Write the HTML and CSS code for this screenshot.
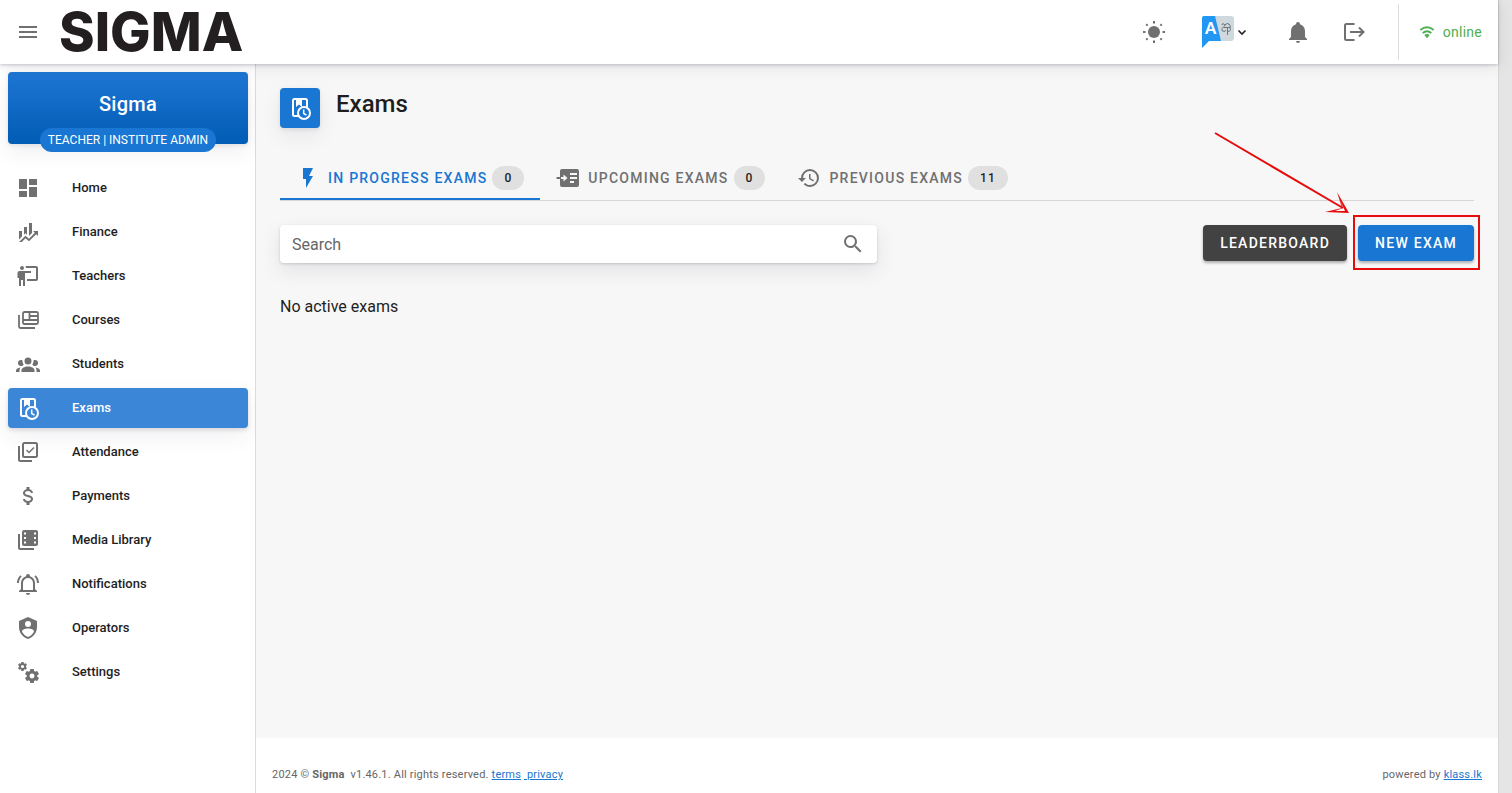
FILE: index.html
```html
<!DOCTYPE html>
<html lang="en">
<head>
<meta charset="utf-8">
<title>Exams - Sigma</title>
<link rel="stylesheet" href="styles.css">
</head>
<body>
<svg class="defs" aria-hidden="true">
  <symbol id="exam" viewBox="0 0 24 24">
    <path d="M10 20H6.500Q5 20 5 18.500V4.500Q5 3 6.500 3H17.500Q19 3 19 4.500V11" fill="none" stroke="currentColor" stroke-width="2"/>
    <path d="M8 3H14V11L11 8.500L8 11Z" fill="currentColor"/>
    <circle cx="16" cy="17" r="6" fill="none" stroke="currentColor" stroke-width="2"/>
    <path d="M15.700 13.500V17.500L18.500 19.200" fill="none" stroke="currentColor" stroke-width="1.500"/>
  </symbol>
  <symbol id="gear" viewBox="0 0 24 24">
    <path d="M12,15.500A3.500,3.500 0 0,1 8.500,12A3.500,3.500 0 0,1 12,8.500A3.500,3.500 0 0,1 15.500,12A3.500,3.500 0 0,1 12,15.500M19.430,12.970C19.470,12.650 19.500,12.330 19.500,12C19.500,11.670 19.470,11.340 19.430,11L21.540,9.370C21.730,9.220 21.780,8.950 21.660,8.730L19.660,5.270C19.540,5.050 19.270,4.960 19.050,5.050L16.560,6.050C16.040,5.660 15.500,5.320 14.870,5.070L14.500,2.420C14.460,2.180 14.250,2 14,2H10C9.750,2 9.540,2.180 9.500,2.420L9.130,5.070C8.500,5.320 7.960,5.660 7.440,6.050L4.950,5.050C4.730,4.960 4.460,5.050 4.340,5.270L2.340,8.730C2.210,8.950 2.270,9.220 2.460,9.370L4.570,11C4.530,11.340 4.500,11.670 4.500,12C4.500,12.330 4.530,12.650 4.570,12.970L2.460,14.630C2.270,14.780 2.210,15.050 2.340,15.270L4.340,18.730C4.460,18.950 4.730,19.030 4.950,18.950L7.440,17.940C7.960,18.340 8.500,18.680 9.130,18.930L9.500,21.580C9.540,21.820 9.750,22 10,22H14C14.250,22 14.460,21.820 14.500,21.580L14.870,18.930C15.500,18.670 16.040,18.340 16.560,17.940L19.050,18.950C19.270,19.030 19.540,18.950 19.660,18.730L21.660,15.270C21.780,15.050 21.730,14.780 21.540,14.630L19.430,12.970Z"/>
  </symbol>
</svg>
<div class="app">
  <header class="topbar">
    <button class="icon-btn" aria-label="Menu"><svg class="icon" viewBox="0 0 24 24"><path d="M3,6H21V8H3V6M3,11H21V13H3V11M3,16H21V18H3V16Z"/></svg></button>
    <a class="logo" href="#">SIGMA</a>
    <div class="tools">
      <button class="icon-btn" aria-label="Theme"><svg class="icon" viewBox="0 0 24 24"><circle cx="12" cy="12" r="6"/><path d="M12 1V3.500M12 20.500V23M1 12H3.500M20.500 12H23M4.200 4.200L5.600 5.600M18.400 18.400L19.800 19.800M4.200 19.800L5.600 18.400M18.400 5.600L19.800 4.200" stroke="currentColor" stroke-width="2"/></svg></button>
      <button class="lang" aria-label="Language">
        <svg class="lang-icon" viewBox="0 0 32 32">
          <path d="M12 0H29Q32 0 32 3V22Q32 25 29 25H18Z" fill="#cfd8dc"/>
          <path d="M2 0H13L19 25H7L0 32V2Q0 0 2 0Z" fill="#2196f3"/>
          <text x="3" y="18" class="lang-letter">A</text>
          <path d="M20 9Q20 7 22 8Q24 9 22 10.500Q19 12.500 20 14.500Q22 16.500 24 14.500M21.500 11.500H28M23 9Q25 6.500 27 8Q29 10 28 12Q29.500 15 26 15.500M25.500 11.500V19" fill="none" stroke="#6b777d" stroke-width="1"/>
        </svg>
        <svg class="chevron" viewBox="0 0 12 12"><path d="M2.500 4.500L6 8L9.500 4.500" fill="none" stroke="#222" stroke-width="1.600"/></svg>
      </button>
      <button class="icon-btn" aria-label="Alerts"><svg class="icon" viewBox="0 0 24 24"><path d="M21,19V20H3V19L5,17V11C5,7.900 7.030,5.170 10,4.290C10,4.190 10,4.100 10,4A2,2 0 0,1 12,2A2,2 0 0,1 14,4C14,4.100 14,4.190 14,4.290C16.970,5.170 19,7.900 19,11V17L21,19M14,21A2,2 0 0,1 12,23A2,2 0 0,1 10,21"/></svg></button>
      <button class="icon-btn" aria-label="Log out"><svg class="icon" viewBox="0 0 24 24"><path d="M12.500 4H4.500Q3 4 3 5.500V18.500Q3 20 4.500 20H12.500M8 12H21M17 7.500L21.500 12L17 16.500" fill="none" stroke="currentColor" stroke-width="2"/></svg></button>
      <div class="status"><svg class="wifi" viewBox="0 0 24 24"><path d="M2 9Q12 1 22 9M5.500 13.500Q12 8 18.500 13.500" fill="none" stroke="currentColor" stroke-width="2.800"/><path d="M8 16.500Q12 13.500 16 16.500L12 21.500Z" fill="currentColor"/></svg>online</div>
    </div>
  </header>
  <div class="body">
    <aside class="sidebar">
      <div class="profile"><span class="profile-name">Sigma</span><span class="role">TEACHER | INSTITUTE ADMIN</span></div>
      <nav class="nav">
        <a href="#"><svg class="icon" viewBox="0 0 24 24"><path d="M13,3V9H21V3M13,21H21V11H13M3,21H11V15H3M3,13H11V3H3V13Z"/></svg>Home</a>
        <a href="#"><svg class="icon" viewBox="0 0 24 24"><path d="M6,16.500L3,19.440V11H6M11,14.660L9.430,13.320L8,14.640V7H11M16,13L13,16V3H16M18.810,12.810L17,11H22V16L20.210,14.210L13,21.360L9.530,18.340L5.750,22H3L9.470,15.660L13,18.640"/></svg>Finance</a>
        <a href="#"><svg class="icon" viewBox="0 0 24 24"><path d="M20,17A2,2 0 0,0 22,15V4A2,2 0 0,0 20,2H9.460C9.810,2.610 10,3.300 10,4H20V15H11V17M15,7V9H9V22H7V16H5V22H3V14H1.500V9A2,2 0 0,1 3.500,7H15M8,4A2,2 0 0,1 6,6A2,2 0 0,1 4,4A2,2 0 0,1 6,2A2,2 0 0,1 8,4Z"/></svg>Teachers</a>
        <a href="#"><svg class="icon" viewBox="0 0 24 24"><path d="M3 7V18.500Q3 20 4.500 20H19M7 5.500Q7 4 8.500 4H20.500Q22 4 22 5.500V14.500Q22 16 20.500 16H8.500Q7 16 7 14.500ZM13.500 4V12M14 8H22M7 12H22" fill="none" stroke="currentColor" stroke-width="1.800"/></svg>Courses</a>
        <a href="#"><svg class="icon" viewBox="0 0 24 24"><path d="M12,5.500A3.500,3.500 0 0,1 15.500,9A3.500,3.500 0 0,1 12,12.500A3.500,3.500 0 0,1 8.500,9A3.500,3.500 0 0,1 12,5.500M5,8C5.560,8 6.080,8.150 6.530,8.420C6.380,9.850 6.800,11.270 7.660,12.380C7.160,13.340 6.160,14 5,14A3,3 0 0,1 2,11A3,3 0 0,1 5,8M19,8A3,3 0 0,1 22,11A3,3 0 0,1 19,14C17.840,14 16.840,13.340 16.340,12.380C17.200,11.270 17.620,9.850 17.470,8.420C17.920,8.150 18.440,8 19,8M5.500,18.250C5.500,16.180 8.410,14.500 12,14.500C15.590,14.500 18.500,16.180 18.500,18.250V20H5.500V18.250M0,20V18.500C0,17.110 1.890,15.940 4.450,15.600C3.860,16.280 3.500,17.220 3.500,18.250V20H0M24,20H20.500V18.250C20.500,17.220 20.140,16.280 19.550,15.600C22.110,15.940 24,17.110 24,18.500V20Z"/></svg>Students</a>
        <a href="#" class="active" aria-current="page"><svg class="icon"><use href="#exam"/></svg>Exams</a>
        <a href="#"><svg class="icon" viewBox="0 0 24 24"><path d="M3 6V19.500Q3 21 4.500 21H16M7 4.500Q7 3 8.500 3H19.500Q21 3 21 4.500V15.500Q21 17 19.500 17H8.500Q7 17 7 15.500Z" fill="none" stroke="currentColor" stroke-width="2"/><path d="M10.500 10L13 12.500L18 7.500" fill="none" stroke="currentColor" stroke-width="1.500"/></svg>Attendance</a>
        <a href="#"><svg class="icon" viewBox="0 0 24 24"><path d="M7,15H9C9,16.080 10.370,17 12,17C13.630,17 15,16.080 15,15C15,13.900 13.960,13.500 11.760,12.970C9.640,12.440 7,11.780 7,9C7,7.210 8.470,5.690 10.500,5.180V3H13.500V5.180C15.530,5.690 17,7.210 17,9H15C15,7.920 13.630,7 12,7C10.370,7 9,7.920 9,9C9,10.100 10.040,10.500 12.240,11.030C14.360,11.560 17,12.220 17,15C17,16.790 15.530,18.310 13.500,18.820V21H10.500V18.820C8.470,18.310 7,16.790 7,15Z"/></svg>Payments</a>
        <a href="#"><svg class="icon" viewBox="0 0 24 24"><path fill-rule="evenodd" d="M4,6H2V20A2,2 0 0,0 4,22H18V20H4V6M20,2H8A2,2 0 0,0 6,4V16A2,2 0 0,0 8,18H20A2,2 0 0,0 22,16V4A2,2 0 0,0 20,2M8 4.500H10V6.500H8ZM8 9H10V11H8ZM8 13.500H10V15.500H8ZM18 4.500H20V6.500H18ZM18 9H20V11H18ZM18 13.500H20V15.500H18Z"/></svg>Media Library</a>
        <a href="#"><svg class="icon" viewBox="0 0 24 24"><path d="M10,21H14A2,2 0 0,1 12,23A2,2 0 0,1 10,21M21,19V20H3V19L5,17V11C5,7.900 7.030,5.170 10,4.290C10,4.190 10,4.100 10,4A2,2 0 0,1 12,2A2,2 0 0,1 14,4C14,4.100 14,4.190 14,4.290C16.970,5.170 19,7.900 19,11V17L21,19M17,11A5,5 0 0,0 12,6A5,5 0 0,0 7,11V18H17V11M19.750,3.190L18.330,4.610C20.040,6.300 21,8.600 21,11H23C23,8.070 21.840,5.250 19.750,3.190M1,11H3C3,8.600 3.960,6.300 5.670,4.610L4.250,3.190C2.160,5.250 1,8.070 1,11Z"/></svg>Notifications</a>
        <a href="#"><svg class="icon" viewBox="0 0 24 24"><path fill-rule="evenodd" d="M12,1L3,5V11C3,16.550 6.840,21.740 12,23C17.160,21.740 21,16.550 21,11V5L12,1M12,5A3,3 0 0,1 15,8A3,3 0 0,1 12,11A3,3 0 0,1 9,8A3,3 0 0,1 12,5M17.130,17C15.920,18.850 14.110,20.240 12,20.920C9.890,20.240 8.080,18.850 6.870,17C6.530,16.500 6.240,16 6,15.470C6,13.820 8.710,12.470 12,12.470C15.290,12.470 18,13.790 18,15.470C17.760,16 17.470,16.500 17.130,17Z"/></svg>Operators</a>
        <a href="#"><svg class="icon" viewBox="0 0 24 24"><use href="#gear" x="1" y="1" width="11" height="11"/><use href="#gear" x="7.500" y="7.500" width="17" height="17"/></svg>Settings</a>
      </nav>
    </aside>
    <div class="content">
      <main class="main">
        <div class="heading"><span class="heading-icon"><svg class="icon"><use href="#exam"/></svg></span><h1>Exams</h1></div>
        <div class="tabs" role="tablist">
          <button class="tab selected" role="tab" aria-selected="true"><svg class="icon" viewBox="0 0 24 24"><path d="M7,2V13H10V22L17,10H13L17,2H7Z"/></svg>IN PROGRESS EXAMS<span class="count">0</span></button>
          <button class="tab" role="tab"><svg class="icon" viewBox="0 0 24 24"><path fill-rule="evenodd" d="M5 3H21Q23 3 23 5V19Q23 21 21 21H6Q4 21 4 19V13H7.500V15.500L11.500 12L7.500 8.500V11H4V5Q4 3 6 3ZM14 7V9H21V7ZM14 11V13H21V11ZM14 15V17H18V15Z"/><path d="M0.500 11H5V13H0.500Z"/></svg>UPCOMING EXAMS<span class="count">0</span></button>
          <button class="tab" role="tab"><svg class="icon" viewBox="0 0 24 24"><path d="M13.500,8H12V13L16.280,15.540L17,14.330L13.500,12.250V8M13,3A9,9 0 0,0 4,12H1L4.960,16.030L9,12H6A7,7 0 0,1 13,5A7,7 0 0,1 20,12A7,7 0 0,1 13,19C11.070,19 9.320,18.210 8.060,16.940L6.640,18.360C8.270,20 10.500,21 13,21A9,9 0 0,0 22,12A9,9 0 0,0 13,3"/></svg>PREVIOUS EXAMS<span class="count">11</span></button>
        </div>
        <div class="actions">
          <label class="search"><input type="text" placeholder="Search" aria-label="Search"><svg class="icon" viewBox="0 0 24 24"><path d="M9.500,3A6.500,6.500 0 0,1 16,9.500C16,11.110 15.410,12.590 14.440,13.730L14.710,14H15.500L20.500,19L19,20.500L14,15.500V14.710L13.730,14.440C12.590,15.410 11.110,16 9.500,16A6.500,6.500 0 0,1 3,9.500A6.500,6.500 0 0,1 9.500,3M9.500,5C7,5 5,7 5,9.500C5,12 7,14 9.500,14C12,14 14,12 14,9.500C14,7 12,5 9.500,5Z"/></svg></label>
          <div class="buttons">
            <button class="btn dark">LEADERBOARD</button>
            <div class="callout">
              <button class="btn primary">NEW EXAM</button>
              <svg class="arrow" viewBox="0 0 136 84" aria-hidden="true"><path d="M1 2L129 77" stroke="#e60c0c" stroke-width="2" fill="none"/><path fill-rule="evenodd" d="M123 61L135 82L111 81L128 77ZM126 69L129 77L121 80L131 80Z" fill="#e60c0c"/></svg>
            </div>
          </div>
        </div>
        <p class="empty">No active exams</p>
      </main>
      <footer class="footer">
        <span>2024 © <b>Sigma</b> &nbsp;v1.46.1. All rights reserved. <a href="#">terms</a> <a href="#">&nbsp;privacy</a></span>
        <span>powered by <a href="#">klass.lk</a></span>
      </footer>
    </div>
  </div>
</div>
</body>
</html>
```
FILE: styles.css
```css
* { box-sizing: border-box; }
body {
  margin: 0;
  padding-right: 13px;
  background: #e5e5e5;
  color: #1e1e1e;
  font: 16px/24px Roboto, sans-serif;
}
button { border: 0; padding: 0; background: none; color: inherit; font: inherit; cursor: pointer; }
a { color: #1976d2; }
.defs { position: absolute; width: 0; height: 0; }
.icon { width: 24px; height: 24px; flex: none; display: block; fill: currentColor; }
.app { display: flex; flex-direction: column; min-height: 100vh; background: #fff; border-right: 1px solid #d6d6d6; }

.topbar {
  position: relative;
  z-index: 1;
  display: flex;
  align-items: center;
  height: 64px;
  padding: 0 16px;
  background: #fff;
  color: #707070;
  box-shadow: 0 1px 3px rgba(50, 50, 93, .25), 0 2px 16px rgba(0, 0, 0, .1);
}
.logo { margin-left: 19px; color: #231f20; font: 800 54px/64px Inter, sans-serif; text-decoration: none; }
.tools { display: flex; align-items: center; margin-left: auto; }
.lang { display: flex; align-items: center; gap: 2px; margin: 0 38px 0 36px; }
.lang-icon { width: 32px; height: 32px; }
.lang-letter { fill: #fff; font: 900 16px Lato, sans-serif; }
.chevron { width: 12px; height: 12px; }
.tools .icon-btn + .icon-btn { margin-left: 32px; }
.status {
  display: flex;
  align-items: center;
  gap: 8px;
  height: 56px;
  margin-left: 32px;
  padding-left: 20px;
  border-left: 1px solid #dcdcdc;
  color: #4caf50;
  font-size: 14px;
  letter-spacing: 0.25px;
}
.wifi { width: 16px; height: 16px; }

.body { flex: 1; display: flex; }
.sidebar { width: 256px; flex: none; padding: 8px 7px 8px 8px; border-right: 1px solid #dcdcdc; background: #fff; }
.profile {
  display: flex;
  flex-direction: column;
  align-items: center;
  height: 72px;
  margin-bottom: 24px;
  padding-top: 16px;
  border-radius: 4px;
  background: linear-gradient(#1f76d4, #005cb4);
  box-shadow: 0 8px 20px rgba(50, 50, 93, .08), 0 2px 4px rgba(0, 0, 0, .08);
  color: #fff;
}
.profile-name { font-size: 20px; line-height: 32px; font-weight: 500; letter-spacing: 0.25px; }
.role { margin-top: 8px; padding: 0 8px; border-radius: 12px; background: #1976d2; font-size: 12px; line-height: 24px; }
.nav { display: flex; flex-direction: column; gap: 4px; }
.nav a {
  display: flex;
  align-items: center;
  gap: 32px;
  height: 40px;
  padding: 0 8px;
  border-radius: 4px;
  color: #1e1e1e;
  font-size: 13px;
  font-weight: 500;
  text-decoration: none;
}
.nav .icon { color: #707070; }
.nav .active { background: #3c86d8; color: #fff; box-shadow: 0 8px 20px rgba(50, 50, 93, .08), 0 2px 4px rgba(0, 0, 0, .12); }
.nav .active .icon { color: #fff; }

.content { flex: 1; min-width: 0; display: flex; flex-direction: column; }
.main { flex: 1; padding: 24px; background: #f7f7f7; }
.heading { display: flex; gap: 16px; }
.heading-icon {
  padding: 8px;
  border-radius: 4px;
  background: #1976d2;
  color: #fff;
  box-shadow: 0 8px 20px rgba(50, 50, 93, .08), 0 2px 4px rgba(0, 0, 0, .08);
}
h1 { margin: 0; font-size: 24px; line-height: 32px; font-weight: 500; }
.tabs { display: flex; margin-top: 28px; border-bottom: 1px solid #d6d6d6; }
.tab {
  display: flex;
  align-items: center;
  height: 44px;
  padding: 0 16px;
  color: #707070;
  font-size: 14px;
  font-weight: 500;
  letter-spacing: 1.25px;
}
.tab .icon { margin-right: 8px; }
.tab.selected { color: #1976d2; box-shadow: inset 0 -2px #1976d2; }
.count { margin-left: 5px; padding: 0 12px; border-radius: 12px; background: #e0e0e0; color: #1e1e1e; font-size: 12px; line-height: 24px; letter-spacing: 1px; }
.actions { display: flex; justify-content: space-between; align-items: flex-start; margin-top: 24px; }
.search {
  display: flex;
  align-items: center;
  width: 50%;
  height: 38px;
  padding: 0 12px;
  border-radius: 4px;
  background: #fff;
  color: #707070;
  box-shadow: 0 8px 20px rgba(50, 50, 93, .1), 0 1px 3px rgba(0, 0, 0, .16);
}
.search input { flex: 1; min-width: 0; border: 0; padding: 2px 0 0; outline: 0; background: none; font: inherit; line-height: 24px; }
.search input::placeholder { color: #666; opacity: 1; }
.buttons { display: flex; gap: 11px; }
.btn {
  height: 36px;
  padding: 0 17px;
  border-radius: 4px;
  color: #fff;
  font-size: 14px;
  font-weight: 500;
  letter-spacing: 1.25px;
  box-shadow: 0 2px 3px rgba(0, 0, 0, .3);
}
.dark { background: #424242; }
.primary { background: #1976d2; }
/* Highlight frame and arrow drawn over the page */
.callout { position: relative; }
.callout::after { content: ""; position: absolute; inset: -10px -6px -9px -5px; border: 2px solid #e60c0c; pointer-events: none; }
.callout .btn { display: block; }
.arrow { position: absolute; right: 124px; bottom: 46px; width: 136px; height: 84px; pointer-events: none; }
.empty { margin: 32px 0 0; }
.footer {
  display: flex;
  justify-content: space-between;
  padding: 25px 16px 6px;
  color: #666;
  font-size: 11px;
  letter-spacing: 0.2px;
}
```
